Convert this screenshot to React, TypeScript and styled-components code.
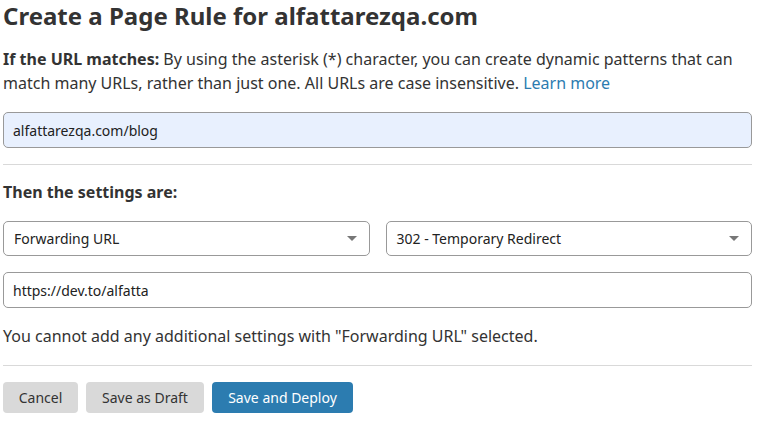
import React from 'react';
import styled, { createGlobalStyle } from 'styled-components';

const GlobalStyle = createGlobalStyle`
  body {
    margin: 0;
    background: #ffffff;
    font-family: "Noto Sans", "Open Sans", sans-serif;
    color: #333333;
  }
`;

const Page = styled.div`
  width: 749px;
  padding: 0 10px 0 3px;
  display: flex;
  flex-direction: column;
`;

const Title = styled.h1`
  margin: 0;
  font-size: 24px;
  line-height: 32px;
  font-weight: 700;
  color: #333333;
`;

const Text = styled.p<{ $top: number }>`
  margin: ${({ $top }) => $top}px 0 0;
  font-size: 16px;
  line-height: 24px;
  color: #333333;
`;

const Strong = styled.strong`
  font-weight: 700;
`;

const LearnMore = styled.a`
  color: #2c7cb0;
  text-decoration: none;
`;

const SubHeading = styled.h2`
  margin: 15px 0 0;
  font-size: 16px;
  line-height: 24px;
  font-weight: 700;
`;

const Field = styled.div<{ $top: number; $autofill?: boolean; $height?: number }>`
  margin-top: ${({ $top }) => $top}px;
  height: ${({ $height }) => $height ?? 36}px;
  box-sizing: border-box;
  border: 1px solid #999999;
  border-radius: 5px;
  background: ${({ $autofill }) => ($autofill ? '#e8f0fe' : '#ffffff')};
  display: flex;
  align-items: center;
  padding: 0 9px;
  font-size: 14px;
  color: #222222;
`;

const Divider = styled.hr<{ $top: number }>`
  margin: ${({ $top }) => $top}px 0 0;
  border: none;
  border-top: 1px solid #d9d9d9;
  height: 0;
`;

const SelectRow = styled.div`
  margin-top: 17px;
  display: grid;
  grid-template-columns: 1fr 1fr;
  gap: 16px;
`;

const Select = styled.div`
  height: 35px;
  box-sizing: border-box;
  border: 1px solid #999999;
  border-radius: 5px;
  background: #ffffff;
  display: flex;
  align-items: center;
  justify-content: space-between;
  padding: 0 12px 0 10px;
  font-size: 14px;
  color: #222222;
`;

const Caret = styled.span`
  width: 0;
  height: 0;
  border-left: 5px solid transparent;
  border-right: 5px solid transparent;
  border-top: 5px solid #777777;
`;

const Actions = styled.div`
  margin-top: 16px;
  display: flex;
  gap: 8px;
`;

const Button = styled.button<{ $primary?: boolean; $width: number }>`
  width: ${({ $width }) => $width}px;
  height: 31px;
  border: none;
  border-radius: 4px;
  font-family: inherit;
  font-size: 14px;
  background: ${({ $primary }) => ($primary ? '#2c7cb0' : '#d9d9d9')};
  color: ${({ $primary }) => ($primary ? '#ffffff' : '#333333')};
  padding: 0;
  cursor: pointer;
`;

const App = () => (
  <>
    <GlobalStyle />
    <Page>
      <Title>Create a Page Rule for alfattarezqa.com</Title>
      <Text $top={15}>
        <Strong>If the URL matches:</Strong> By using the asterisk (*) character, you can create dynamic
        patterns that can match many URLs, rather than just one. All URLs are case insensitive.{' '}
        <LearnMore href="#">Learn more</LearnMore>
      </Text>
      <Field $top={17} $autofill>alfattarezqa.com/blog</Field>
      <Divider $top={16} />
      <SubHeading>Then the settings are:</SubHeading>
      <SelectRow>
        <Select>
          Forwarding URL
          <Caret />
        </Select>
        <Select>
          302 - Temporary Redirect
          <Caret />
        </Select>
      </SelectRow>
      <Field $top={16}>https://dev.to/alfatta</Field>
      <Text $top={16}>You cannot add any additional settings with "Forwarding URL" selected.</Text>
      <Divider $top={17} />
      <Actions>
        <Button $width={75}>Cancel</Button>
        <Button $width={118}>Save as Draft</Button>
        <Button $width={141} $primary>Save and Deploy</Button>
      </Actions>
    </Page>
  </>
);

export default App;
